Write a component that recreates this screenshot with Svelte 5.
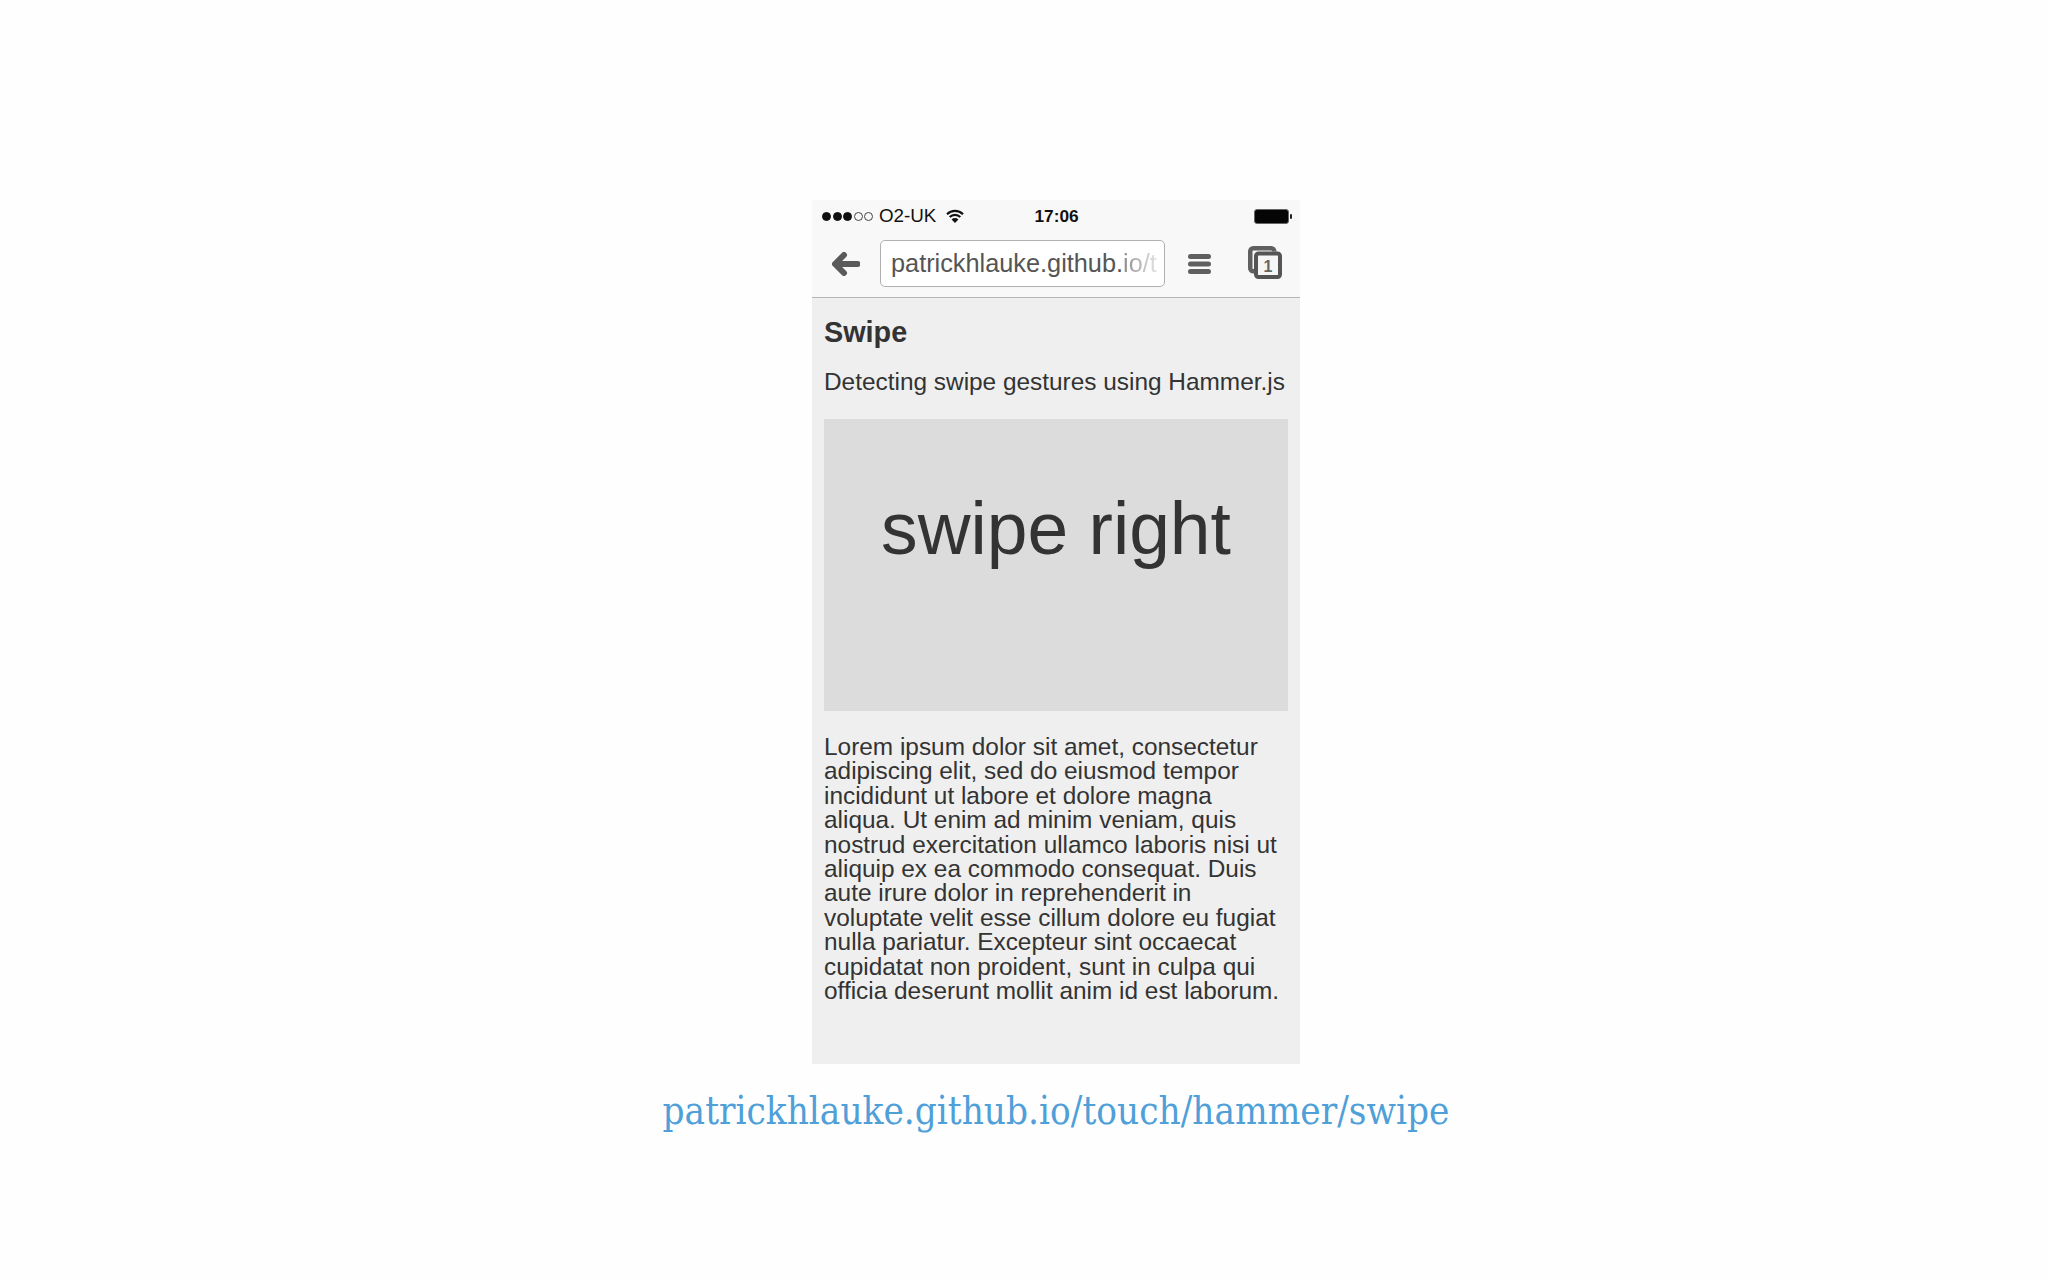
<script lang="ts">
  const signal = [true, true, true, false, false];
</script>

<div class="page">
  <div class="phone">
    <div class="chrome">
      <div class="status">
        <div class="signal">
          {#each signal as on}
            <span class="dot" class:on></span>
          {/each}
        </div>
        <span class="carrier">O2-UK</span>
        <svg class="wifi" width="18" height="14" viewBox="0 0 18 14">
          <path d="M1 5.200a11.500 11.500 0 0 1 16 0M3.700 8a7.500 7.500 0 0 1 10.600 0" fill="none" stroke="#111" stroke-width="2.200" />
          <path d="M9 14L5.600 10.500a4.800 4.800 0 0 1 6.800 0z" fill="#111" />
        </svg>
        <span class="time">17:06</span>
        <svg class="battery" width="38" height="15" viewBox="0 0 38 15">
          <rect x="0.500" y="0.500" width="34" height="14" rx="2.500" fill="#050505" stroke="#666" />
          <rect x="36" y="5" width="2" height="5" rx="1" fill="#222" />
        </svg>
      </div>
      <div class="toolbar">
        <svg class="back" width="28" height="24" viewBox="0 0 28 24">
          <path d="M12 3L3 12l9 9M4 12H25.500" fill="none" stroke="#5a5a5a" stroke-width="6" stroke-linecap="round" stroke-linejoin="round" />
        </svg>
        <div class="url">patrickhlauke.github.<span class="fade">io/t</span></div>
        <svg class="menu" width="23" height="20" viewBox="0 0 23 20">
          <path d="M2.500 2.500h18M2.500 10h18M2.500 17.500h18" fill="none" stroke="#5f5f5f" stroke-width="5" stroke-linecap="round" />
        </svg>
        <svg class="tabs" width="34" height="33" viewBox="0 0 34 33">
          <rect x="2.250" y="2.250" width="24" height="23" rx="3" fill="#f8f8f8" stroke="#606060" stroke-width="4.500" />
          <rect x="6" y="5.500" width="27" height="27" rx="4" fill="#f8f8f8" />
          <rect x="8" y="7.500" width="24" height="23.500" rx="2.500" fill="#f6f6f6" stroke="#555" stroke-width="4" />
          <text x="20" y="25.500" text-anchor="middle" class="tabnum">1</text>
        </svg>
      </div>
    </div>
    <div class="content">
      <h1>Swipe</h1>
      <p class="intro">Detecting swipe gestures using Hammer.js</p>
      <div class="swipe">swipe right</div>
      <p class="lorem">Lorem ipsum dolor sit amet, consectetur adipiscing elit, sed do eiusmod tempor incididunt ut labore et dolore magna aliqua. Ut enim ad minim veniam, quis nostrud exercitation ullamco laboris nisi ut aliquip ex ea commodo consequat. Duis aute irure dolor in reprehenderit in voluptate velit esse cillum dolore eu fugiat nulla pariatur. Excepteur sint occaecat cupidatat non proident, sunt in culpa qui officia deserunt mollit anim id est laborum.</p>
    </div>
  </div>
  <div class="caption">patrickhlauke.github.io/touch/hammer/swipe</div>
</div>

<style>
  :global(body) {
    background: #fefefe;
  }
  .page {
    min-height: 1280px;
    box-sizing: border-box;
    padding: 200px 0 0 64px;
    display: flex;
    flex-direction: column;
    align-items: center;
    font-family: "Liberation Sans", Arial, sans-serif;
    color: #333;
  }
  .phone {
    width: 488px;
    height: 864px;
    background: #efefef;
  }
  .chrome {
    height: 98px;
    box-sizing: border-box;
    background: #f8f8f8;
    border-bottom: 1px solid #b4b4b4;
  }
  .status {
    height: 31px;
    padding: 1px 8px 0 10px;
    box-sizing: border-box;
    display: flex;
    align-items: center;
    color: #111;
    font-size: 18.800px;
  }
  .signal {
    display: flex;
    gap: 1.500px;
  }
  .dot {
    width: 9px;
    height: 9px;
    box-sizing: border-box;
    border-radius: 50%;
    border: 1px solid #444;
  }
  .dot.on {
    background: #111;
    border-color: #111;
  }
  .carrier {
    margin-left: 6px;
  }
  .wifi {
    margin-left: 10px;
  }
  .time {
    margin-left: 70px;
    font-weight: 700;
    font-size: 17.300px;
  }
  .battery {
    margin-left: auto;
  }
  .toolbar {
    height: 66px;
    display: flex;
    align-items: center;
    padding-left: 20px;
  }
  .url {
    width: 285px;
    height: 47px;
    box-sizing: border-box;
    margin: 0 0 1px 20px;
    padding-left: 10px;
    overflow: hidden;
    white-space: nowrap;
    background: #fff;
    border: 1px solid #b0b0b0;
    border-radius: 5px;
    color: #555;
    font-size: 25.300px;
    line-height: 45px;
  }
  .fade {
    background: linear-gradient(90deg, #8c8c8c, #e4e4e4);
    -webkit-background-clip: text;
    background-clip: text;
    color: transparent;
  }
  .menu {
    margin-left: 23px;
  }
  .tabs {
    margin-left: 37px;
    margin-bottom: 3px;
  }
  .tabnum {
    font-size: 16px;
    font-weight: 700;
    fill: #666;
  }
  .content {
    padding: 19px 12px 0;
  }
  h1 {
    margin: 0;
    font-size: 28.800px;
    line-height: 31px;
  }
  .intro {
    margin: 20px 0 0;
    font-size: 24.400px;
    line-height: 28px;
  }
  .swipe {
    height: 292px;
    margin-top: 23px;
    padding-top: 68px;
    box-sizing: border-box;
    background: #dcdcdc;
    font-size: 73.200px;
    line-height: 84px;
    text-align: center;
  }
  .lorem {
    margin: 24px 0 0;
    font-size: 24.400px;
    line-height: 24.400px;
  }
  .caption {
    margin-top: 23px;
    font-family: "DejaVu Serif Condensed", "DejaVu Serif", serif;
    font-size: 38.300px;
    line-height: 48px;
    color: #4f9fd9;
    white-space: nowrap;
  }
</style>
